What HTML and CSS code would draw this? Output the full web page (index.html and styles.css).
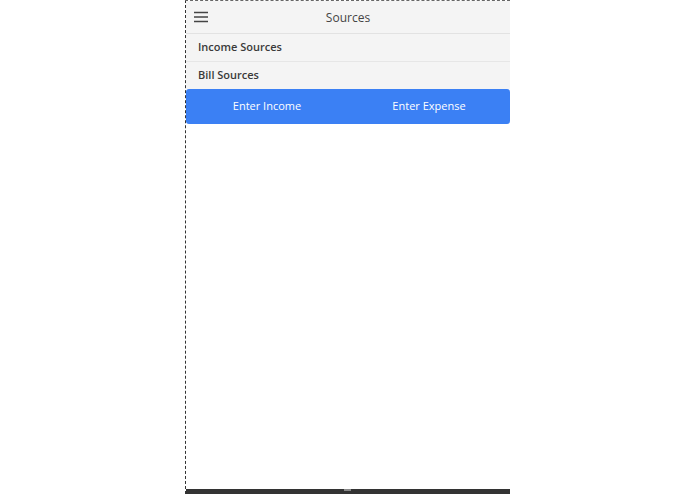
FILE: index.html
```html
<!DOCTYPE html>
<html>
<head>
<meta charset="utf-8">
<link rel="stylesheet" href="styles.css">
</head>
<body>
<div class="phone">
  <header class="toolbar">
    <span class="menu">
      <svg width="16" height="12" viewBox="0 0 16 12"><path d="M1 1.5H15M1 6H15M1 10.5H15" stroke="#444" stroke-width="1.6" fill="none"/></svg>
    </span>
    <span class="title">Sources</span>
  </header>
  <div class="list">
    <div class="item">Income Sources</div>
    <div class="item">Bill Sources</div>
  </div>
  <div class="actions">
    <span class="action">Enter Income</span>
    <span class="action">Enter Expense</span>
  </div>
  <div class="content"></div>
  <div class="bottom"><span class="handle"></span></div>
</div>
</body>
</html>
```
FILE: styles.css
```css
html, body {
  margin: 0;
  padding: 0;
  height: 100%;
  background: #fff;
}
body {
  font-family: "Open Sans", "Noto Sans", sans-serif;
  color: #333;
}
.phone {
  width: 325px;
  height: 494px;
  margin: 0 auto;
  box-sizing: border-box;
  border-left: 1px dashed #333;
  border-top: 1px dashed #666;
  display: flex;
  flex-direction: column;
}
.toolbar {
  height: 32px;
  background: #f4f4f4;
  border-bottom: 1px solid #e2e2e2;
  display: flex;
  align-items: center;
  position: relative;
}
.menu {
  display: flex;
  margin-left: 7px;
  margin-top: -1px;
}
.title {
  position: absolute;
  left: 0;
  right: 0;
  text-align: center;
  font-size: 12px;
  font-weight: 500;
  color: #444;
  pointer-events: none;
}
.list {
  display: flex;
  flex-direction: column;
}
.item {
  height: 25px;
  line-height: 25px;
  padding-left: 12px;
  padding-bottom: 2px;
  background: #f4f4f4;
  border-bottom: 1px solid #e6e6e6;
  font-size: 11px;
  font-weight: 600;
  color: #3a3a3a;
}
.item:last-child {
  border-bottom: none;
}
.actions {
  height: 35px;
  padding-bottom: 3px;
  box-sizing: border-box;
  background: #3b80f4;
  border-radius: 3px;
  display: grid;
  grid-template-columns: 1fr 1fr;
  align-items: center;
  text-align: center;
  color: #fff;
  font-size: 11px;
  font-weight: 500;
}
.content {
  flex: 1;
}
.bottom {
  height: 5px;
  background: #333;
  display: flex;
  justify-content: center;
}
.handle {
  width: 7px;
  height: 2px;
  background: #888;
  margin-right: 1px;
}
```
